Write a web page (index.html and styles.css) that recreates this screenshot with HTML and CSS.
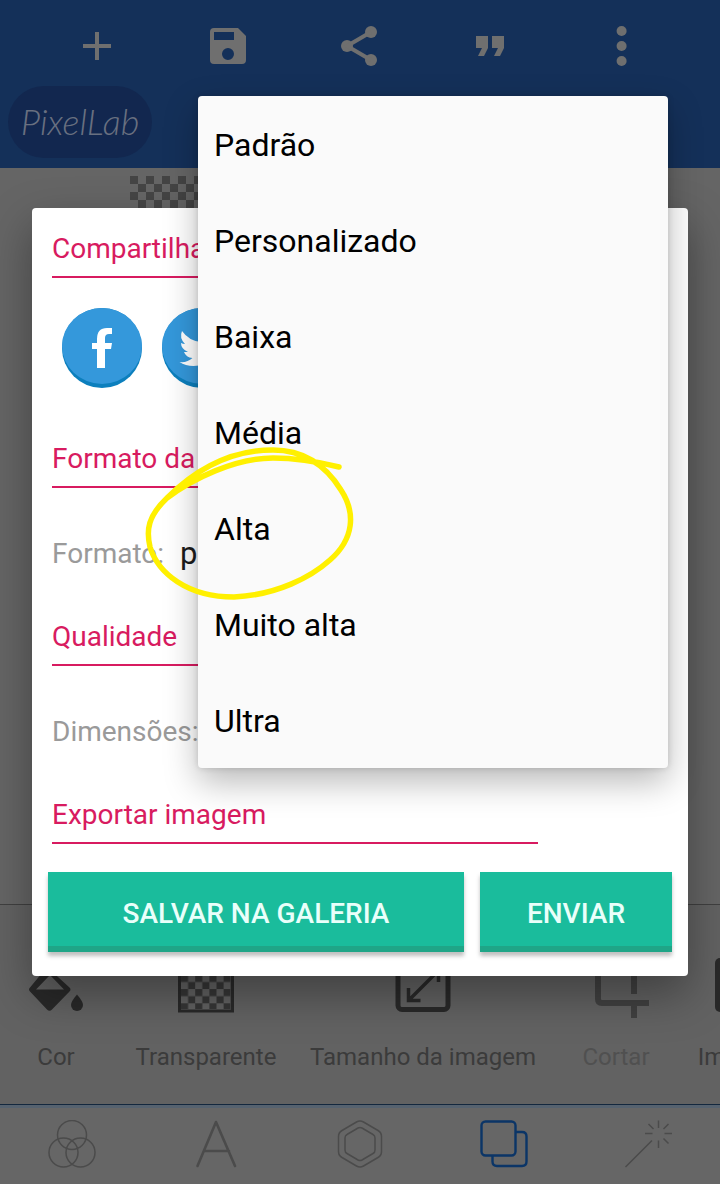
FILE: index.html
```
<!DOCTYPE html>
<html lang="pt">
<head>
    <meta charset="UTF-8">
    <meta name="viewport" content="width=device-width, initial-scale=1.0">
    <title>PixelLab</title>
    <link rel="stylesheet" href="styles.css">
</head>
<body>
    <div class="screen">
        <header class="header">
            <div class="toolbar">
                <svg class="icon" viewBox="0 0 24 24"><path d="M19 13h-6v6h-2v-6H5v-2h6V5h2v6h6z"/></svg>
                <svg class="icon" viewBox="0 0 24 24"><path fill-rule="evenodd" d="M17 3H5a2 2 0 0 0-2 2v14a2 2 0 0 0 2 2h14a2 2 0 0 0 2-2V7zm-5 16a3 3 0 1 1 0-6 3 3 0 0 1 0 6zm3-10H5V5h10z"/></svg>
                <svg class="icon" viewBox="0 0 24 24"><circle cx="6" cy="12" r="3"/><circle cx="18" cy="5" r="3"/><circle cx="18" cy="19" r="3"/><path class="line" d="M18 5L6 12l12 7"/></svg>
                <svg class="icon" viewBox="0 0 24 24"><path d="M5 7h6v6l-2 4H6l2-4H5zM13 7h6v6l-2 4h-3l2-4h-3z"/></svg>
                <svg class="icon" viewBox="0 0 24 24"><circle cx="12.300" cy="4.500" r="2.500"/><circle cx="12.300" cy="12" r="2.500"/><circle cx="12.300" cy="19.500" r="2.500"/></svg>
            </div>
            <div class="logo">PixelLab</div>
        </header>

        <main class="canvas">
            <div class="checker"></div>
        </main>

        <section class="tools">
            <div class="tool">
                <svg class="tool-icon" viewBox="0 0 56 64"><path fill-rule="evenodd" d="M19 15L2 35.500q-2 2 0 4L19 57.500q2.500 2.500 5 0L41.500 39.500q2-2 0-4zM8 37.500L22 23l14 14.500z"/><path d="M49 42.500q6 7 6 10.500a6 6 0 0 1-12 0q0-3.500 6-10.500z"/></svg>
                <span>Cor</span>
            </div>
            <div class="tool">
                <svg class="tool-icon" viewBox="0 0 56 64">
                    <defs>
                        <pattern id="check" x="3" y="8.700" width="14.200" height="14.200" patternUnits="userSpaceOnUse">
                            <path fill="#363636" d="M0 0h7.100v7.100H0zM7.100 7.100h7.100v7.100H7.100z"/>
                        </pattern>
                    </defs>
                    <path fill="url(#check)" d="M3 7h50v50H3z"/>
                    <path class="frame" d="M1.500 6h53v53h-53z"/>
                </svg>
                <span>Transparente</span>
            </div>
            <div class="tool">
                <svg class="tool-icon" viewBox="0 0 56 64"><rect class="outline" x="3" y="6" width="50" height="51.500" rx="4"/><path class="arrow" d="M14 48L42.500 19.500M13.500 36v12.500H25.500M31 18.500h12.500V30"/></svg>
                <span>Tamanho da imagem</span>
            </div>
            <div class="tool muted">
                <svg class="tool-icon" viewBox="0 0 56 64"><path class="crop" d="M10 6v41q0 4 4 4h47M17 14h29v28M46 51v15"/></svg>
                <span>Cortar</span>
            </div>
            <div class="tool">
                <svg class="tool-icon" viewBox="0 0 56 64"><rect x="-1" y="6" width="57" height="54" rx="5"/></svg>
                <span>Importar</span>
            </div>
        </section>

        <nav class="nav">
            <svg class="nav-icon" viewBox="0 0 48 48"><circle cx="24" cy="15" r="14.500"/><circle cx="15.500" cy="32.500" r="14.500"/><circle cx="32.500" cy="32.500" r="14.500"/></svg>
            <svg class="nav-icon letter" viewBox="0 0 48 48"><path d="M5.500 46L24 2l19 44M12 31h25"/></svg>
            <svg class="nav-icon" viewBox="0 0 48 48"><path d="M20.500 2q3.500-2 7 0L42 10.500q3.500 2 3.500 6v15q0 4-3.500 6L27.500 46q-3.500 2-7 0L6 37.500q-3.500-2-3.500-6v-15q0-4 3.500-6z"/><path d="M22 8q2-1 4 0l11 6.500q2 1 2 3.500v12q0 2.500-2 3.500L26 40q-2 1-4 0l-11-6.500q-2-1-2-3.500V18q0-2.500 2-3.500z"/></svg>
            <svg class="nav-icon active" viewBox="0 0 48 48"><rect x="1.500" y="1.500" width="34" height="34" rx="4"/><path d="M36 12h6q4.500 0 4.500 4.500v25q0 4.500-4.500 4.500H17q-4.500 0-4.500-4.500V36"/></svg>
            <svg class="nav-icon" viewBox="0 0 48 48"><path d="M1.500 47L28 20.500M34.500.500V8M34.500 20.500v7.500M21 13.500h7.500M40.500 13.500H48M24.500 4l5 5M44.500 4l-5 5M39.500 18.500l5 5"/></svg>
        </nav>
    </div>

    <div class="dialog">
        <h2 class="title">Compartilhar</h2>
        <div class="share">
            <svg class="social" viewBox="0 0 80 80"><circle class="social-edge" cx="40" cy="40" r="40"/><path class="social-face" d="M0 38a40 38 0 0 1 80 0 40 38 0 0 1-80 0z"/><path class="glyph" d="M35 60V41h-5v-6h5v-4q0-11 10-11h5v6h-3q-4 0-4 4v5h7l-1 6h-6v19z"/></svg>
            <svg class="social" viewBox="0 0 80 80"><circle class="social-edge" cx="40" cy="40" r="40"/><path class="social-face" d="M0 38a40 38 0 0 1 80 0 40 38 0 0 1-80 0z"/><path class="glyph" d="M61 27a18 18 0 0 1-5 1.500q3-2 4-4.500-2.500 1.500-5.500 2a9 9 0 0 0-15.500 8q-12-1-19-11-3 7 3 13-2 0-4-1 0 6 7 9h-4q2 5.500 8.500 6-5.500 5-13 4 6 4 14 4c16 0 26-13 25.500-26q2.500-2 4-5z"/></svg>
        </div>
        <h2 class="title">Formato da imagem</h2>
        <div class="row"><span class="label">Formato:</span><span class="value">png</span></div>
        <h2 class="title">Qualidade</h2>
        <div class="row"><span class="label">Dimensões:</span></div>
        <h2 class="title">Exportar imagem</h2>
        <div class="buttons">
            <button class="button button-save">SALVAR NA GALERIA</button>
            <button class="button">ENVIAR</button>
        </div>
    </div>

    <ul class="menu">
        <li>Padrão</li>
        <li>Personalizado</li>
        <li>Baixa</li>
        <li>Média</li>
        <li>Alta</li>
        <li>Muito alta</li>
        <li>Ultra</li>
    </ul>

    <svg class="marker" viewBox="0 0 220 160">
        <path d="M199 27C179 22 158 18 133 18C95 18 52 39 27 58C61 24 96 10 133 10C168 10 188 29 201 50C216 73 214 99 190 120C171 137 137 155 94 157C47 157 18 133 10 107C6 90 8 76 27 58"/>
    </svg>
</body>
</html>
```
FILE: styles.css
```
* {
    box-sizing: border-box;
}
body {
    position: relative;
    width: 720px;
    height: 1184px;
    margin: 0;
    overflow: hidden;
    font-family: Roboto, "Liberation Sans", sans-serif;
}
.screen {
    display: flex;
    flex-direction: column;
    height: 1184px;
    background: #656565;
}

/* top bar */
.header {
    height: 168px;
    background: #143059;
}
.toolbar {
    display: flex;
    justify-content: space-around;
    align-items: center;
    height: 86px;
    padding: 6px 33px 0 31px;
}
.icon {
    width: 48px;
    height: 48px;
    fill: #6f6f6f;
}
.icon .line {
    fill: none;
    stroke: #6f6f6f;
    stroke-width: 2;
}
.logo {
    width: 144px;
    height: 72px;
    margin-left: 8px;
    border-radius: 36px;
    background: #12274f;
    color: #697080;
    font: italic 300 36px/70px Lato, sans-serif;
    text-align: center;
}

.canvas {
    height: 736px;
    padding: 8px 0 0 130px;
}
.checker {
    width: 460px;
    height: 720px;
    background: repeating-conic-gradient(#666 0 25%, #454545 0 50%) 0 0 / 16px 16px;
}

/* tools of the current tab */
.tools {
    display: grid;
    grid-template-columns: 112px 188px 246px 140px 116px;
    height: 200px;
    padding-top: 47px;
    overflow: hidden;
    border-top: 1px solid #404040;
    background: #626262;
    color: #3b3b3b;
    font-size: 24px;
}
.tool {
    display: flex;
    flex-direction: column;
    align-items: center;
    gap: 27px;
    line-height: 28px;
    white-space: nowrap;
}
.tool-icon {
    width: 56px;
    height: 64px;
    overflow: visible;
    fill: #292929;
}
.tool-icon .frame,
.tool-icon .outline,
.tool-icon .arrow,
.tool-icon .crop {
    fill: none;
    stroke: #292929;
    stroke-width: 3;
}
.tool-icon .outline {
    stroke-width: 5;
}
.tool-icon .arrow {
    stroke-width: 3.5;
}
.tool-icon .crop {
    stroke: #414141;
    stroke-width: 6;
}
.muted {
    color: #505050;
}

.nav {
    display: flex;
    justify-content: space-around;
    height: 80px;
    padding-top: 12px;
    border-top: 1px solid #14283e;
    box-shadow: inset 0 3px #56626f;
    background: #666;
}
.nav-icon {
    width: 48px;
    height: 48px;
    margin-top: 3px;
    fill: none;
    stroke: #4b4b4b;
    stroke-width: 1.5;
}
.nav-icon.letter {
    stroke-width: 2.6;
    stroke-linecap: round;
    stroke-linejoin: round;
}
.nav-icon.active {
    stroke: #0b3567;
    stroke-width: 2.4;
}

/* export dialog */
.dialog {
    position: absolute;
    top: 208px;
    left: 32px;
    width: 656px;
    height: 768px;
    padding: 16px 16px 0;
    border-radius: 4px;
    background: #fff;
    box-shadow: 0 18px 45px rgba(0, 0, 0, 0.35);
}
.title {
    width: 486px;
    height: 54px;
    margin: 0 0 0 4px;
    border-bottom: 2px solid #d81b60;
    color: #d81b60;
    font-size: 28px;
    font-weight: 400;
    line-height: 50px;
}
.share {
    display: flex;
    gap: 20px;
    height: 156px;
    padding: 30px 14px 0;
}
.social {
    width: 80px;
    height: 80px;
}
.social-edge {
    fill: #0c7fbd;
}
.social-face {
    fill: #3498db;
}
.glyph {
    fill: #fff;
}
.row {
    display: flex;
    gap: 16px;
    height: 124px;
    padding-left: 4px;
    font-size: 28px;
    line-height: 132px;
}
.label {
    color: #9a9a9a;
}
.value {
    color: #1c1c1c;
    font-size: 31px;
    line-height: 131px;
}
.buttons {
    display: flex;
    gap: 16px;
    padding-top: 28px;
}
.button {
    width: 192px;
    height: 80px;
    padding: 9px 0 0;
    border: none;
    border-bottom: 6px solid #1fa587;
    background: #1abc9c;
    box-shadow: 0 4px 4px rgba(0, 0, 0, 0.25);
    color: #e9fffa;
    font: 500 28px/65px Roboto, sans-serif;
}
.button-save {
    width: 416px;
}

/* quality list */
.menu {
    position: absolute;
    top: 96px;
    left: 198px;
    width: 470px;
    margin: 0;
    padding: 0;
    border-radius: 4px;
    background: #fafafa;
    box-shadow: 0 14px 34px rgba(0, 0, 0, 0.28), 0 0 6px rgba(0, 0, 0, 0.15);
    list-style: none;
}
.menu li {
    height: 96px;
    padding-left: 16px;
    color: #000;
    font-size: 32px;
    line-height: 98px;
}

.marker {
    position: absolute;
    top: 440px;
    left: 140px;
    width: 220px;
    height: 160px;
    fill: none;
    stroke: #fff000;
    stroke-width: 5.5;
    stroke-linecap: round;
    stroke-linejoin: round;
}
```
